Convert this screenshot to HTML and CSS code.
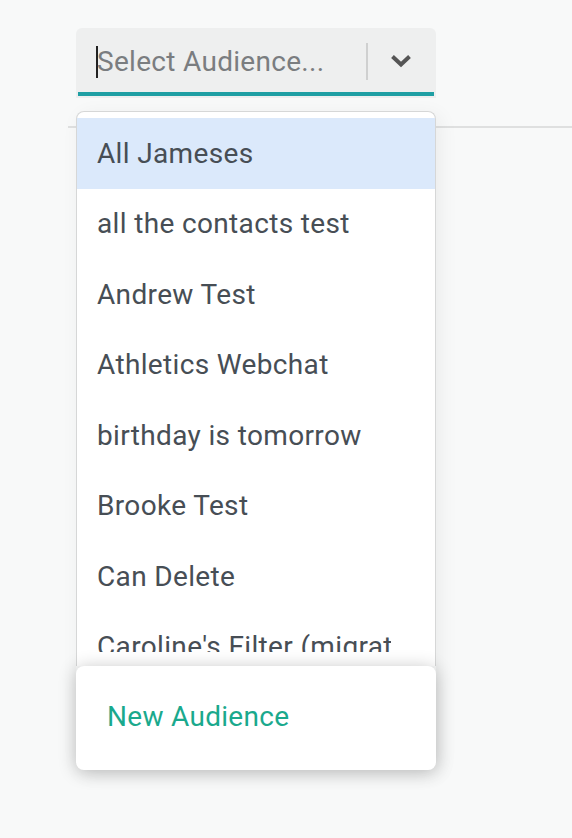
FILE: index.html
```html
<!DOCTYPE html>
<html>
<head>
<meta charset="utf-8">
<link rel="stylesheet" href="styles.css">
</head>
<body>
<div class="page">
  <div class="picker">
    <div class="select">
      <div class="select-inner">
        <span class="caret"></span>
        <span class="placeholder">Select Audience...</span>
        <span class="sep"></span>
        <span class="chev">
          <svg width="22" height="14" viewBox="0 0 22 14"><path d="M2.5 2.5 L11 10.5 L19.5 2.5" fill="none" stroke="#555" stroke-width="4" stroke-linecap="butt" stroke-linejoin="miter"/></svg>
        </span>
      </div>
    </div>
    <div class="rule"></div>
    <div class="dropdown">
      <div class="list-wrap">
        <ul class="list">
          <li class="item active"><span class="label">All Jameses</span></li>
          <li class="item"><span class="label">all the contacts test</span></li>
          <li class="item"><span class="label">Andrew Test</span></li>
          <li class="item"><span class="label">Athletics Webchat</span></li>
          <li class="item"><span class="label">birthday is tomorrow</span></li>
          <li class="item"><span class="label">Brooke Test</span></li>
          <li class="item"><span class="label">Can Delete</span></li>
          <li class="item"><span class="label">Caroline's Filter (migrated)</span></li>
          <li class="item"><span class="label">Cheese Lovers</span></li>
        </ul>
      </div>
      <div class="footer"><span class="new">New Audience</span></div>
    </div>
  </div>
</div>
</body>
</html>
```

FILE: styles.css
```css
html, body {
  margin: 0;
  padding: 0;
  background: #f8f9f9;
  font-family: Roboto, "Liberation Sans", sans-serif;
}
.page {
  height: 838px;
  padding-top: 28px;
  box-sizing: border-box;
}
.picker {
  position: relative;
}
.select {
  margin-left: 76px;
  width: 360px;
  box-sizing: border-box;
  background: #eeefef;
  border-radius: 6px 6px 0 0;
  padding: 0 2px 2px;
}
.select-inner {
  height: 64px;
  border-bottom: 4px solid #1f9fa4;
  display: flex;
  align-items: center;
  padding-left: 18px;
}
.caret {
  width: 2px;
  height: 32px;
  background: #222;
  margin-top: 4px;
}
.placeholder {
  font-size: 28px;
  letter-spacing: 0.3px;
  color: #7a7d80;
  flex: 1;
  margin-left: -1px;
  margin-top: 2px;
  white-space: nowrap;
}
.sep {
  width: 2px;
  height: 37px;
  background: #cfd0d0;
  margin-top: 3px;
}
.chev {
  width: 66px;
  display: flex;
  justify-content: center;
  align-items: center;
  margin-top: 2px;
}
.chev svg { display: block; }
.rule {
  margin: 28px 0 0 68px;
  height: 2px;
  background: #dfe0e0;
}
.dropdown {
  position: absolute;
  top: 83px;
  left: 76px;
  width: 360px;
  display: flex;
  flex-direction: column;
  box-shadow: 4px 4px 20px rgba(0,0,0,0.06);
  border-radius: 8px;
}
.list-wrap {
  height: 555px;
  box-sizing: border-box;
  background: #fff;
  border: 1px solid #d6d7d7;
  border-bottom: none;
  border-radius: 8px 8px 0 0;
}
.list {
  list-style: none;
  margin: 0;
  padding: 6px 0 0;
  height: 540px;
  box-sizing: border-box;
  overflow: hidden;
}
.item {
  height: 70.5px;
  display: flex;
  align-items: center;
  padding: 0 44px 0 20px;
  font-size: 28px;
  letter-spacing: 0.35px;
  color: #474e55;
  white-space: nowrap;
}
.label {
  flex: 1;
  min-width: 0;
  overflow: hidden;
}
.item.active {
  background: #dbe9fb;
}
.footer {
  position: relative;
  height: 104px;
  background: #fff;
  border-radius: 8px;
  box-shadow: 0 2px 18px rgba(0,0,0,0.24);
  display: flex;
  align-items: center;
  padding-left: 31px;
  padding-bottom: 4px;
  box-sizing: border-box;
}
.new {
  font-size: 28px;
  letter-spacing: 0.3px;
  color: #1aa98d;
}
```
